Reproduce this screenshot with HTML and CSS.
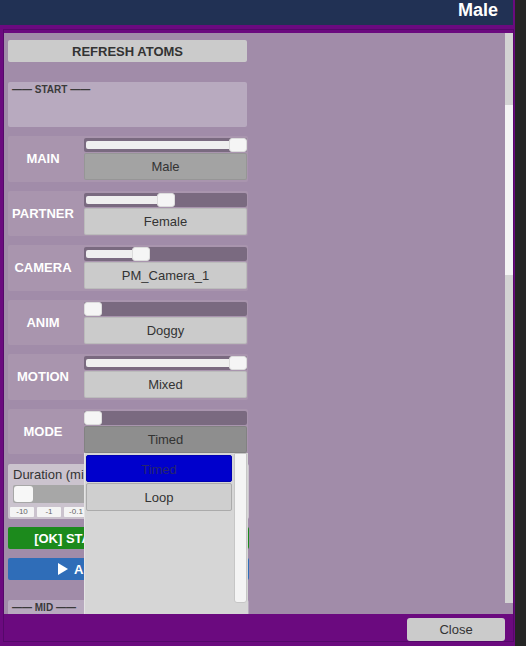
FILE: index.html
```html
<!DOCTYPE html>
<html lang="en">

<head>
    <meta charset="UTF-8">
    <meta name="viewport" content="width=device-width, initial-scale=1.0">
    <title>Male</title>
    <link rel="stylesheet" href="styles.css">
</head>

<body>
    <div class="window">
        <div class="titlebar">
            <span class="title">Male</span>
        </div>

        <div class="frame">
            <div class="panel">
                <div class="column">
                    <button class="btn refresh">REFRESH ATOMS</button>

                    <div class="section start">—— START ——</div>

                    <!-- atom rows -->
                    <div class="row first">
                        <div class="row-label">MAIN</div>
                        <div class="row-controls">
                            <div class="track">
                                <div class="fill" style="width: 145px"></div>
                                <div class="thumb" style="left: 145px"></div>
                            </div>
                            <div class="dropdown selected">Male</div>
                        </div>
                    </div>

                    <div class="row">
                        <div class="row-label">PARTNER</div>
                        <div class="row-controls">
                            <div class="track">
                                <div class="fill" style="width: 73px"></div>
                                <div class="thumb" style="left: 73px"></div>
                            </div>
                            <div class="dropdown">Female</div>
                        </div>
                    </div>

                    <div class="row">
                        <div class="row-label">CAMERA</div>
                        <div class="row-controls">
                            <div class="track">
                                <div class="fill" style="width: 48px"></div>
                                <div class="thumb" style="left: 48px"></div>
                            </div>
                            <div class="dropdown">PM_Camera_1</div>
                        </div>
                    </div>

                    <div class="row">
                        <div class="row-label">ANIM</div>
                        <div class="row-controls">
                            <div class="track">
                                <div class="thumb" style="left: 0"></div>
                            </div>
                            <div class="dropdown">Doggy</div>
                        </div>
                    </div>

                    <div class="row">
                        <div class="row-label">MOTION</div>
                        <div class="row-controls">
                            <div class="track">
                                <div class="fill" style="width: 145px"></div>
                                <div class="thumb" style="left: 145px"></div>
                            </div>
                            <div class="dropdown">Mixed</div>
                        </div>
                    </div>

                    <div class="row">
                        <div class="row-label">MODE</div>
                        <div class="row-controls">
                            <div class="track">
                                <div class="thumb" style="left: 0"></div>
                            </div>
                            <div class="dropdown open">Timed</div>
                        </div>
                    </div>

                    <!-- duration slider -->
                    <div class="duration">
                        <div class="duration-label">Duration (minutes)</div>
                        <div class="duration-track">
                            <div class="duration-thumb"></div>
                        </div>
                        <div class="steps">
                            <span class="step">-10</span>
                            <span class="step">-1</span>
                            <span class="step">-0.1</span>
                            <span class="step">+0.1</span>
                            <span class="step">+1</span>
                            <span class="step">+10</span>
                        </div>
                    </div>

                    <button class="btn green">[OK] STARTED - TAP TO STOP</button>
                    <button class="btn blue">
                        <svg class="play" width="10" height="12" viewBox="0 0 10 12">
                            <path d="M0 0 L10 6 L0 12 Z" fill="#fff" />
                        </svg>
                        APPLY TRANSITION
                    </button>

                    <div class="section mid">—— MID ——</div>

                    <!-- open MODE dropdown -->
                    <div class="popup">
                        <div class="popup-list">
                            <div class="option active">Timed</div>
                            <div class="option">Loop</div>
                        </div>
                        <div class="popup-scroll"></div>
                    </div>
                </div>

                <div class="scrollbar">
                    <div class="scroll-thumb"></div>
                </div>
            </div>

            <div class="footer">
                <button class="close">Close</button>
            </div>
        </div>
    </div>
</body>

</html>
```

FILE: styles.css
```css
body {
    margin: 0;
    background-color: #252525;
    font-family: 'Liberation Sans', Arial, sans-serif;
}

.window {
    width: 515px;
    height: 646px;
    background-color: #6b0a7f;
    overflow: hidden;
}

.titlebar {
    width: 513px;
    height: 25px;
    background-color: #213154;
    display: flex;
    justify-content: flex-end;
    box-sizing: border-box;
    padding-right: 15px;
}

.title {
    color: white;
    font-size: 18px;
    font-weight: bold;
    line-height: 20px;
}

.frame {
    margin: 4px 1px 0 3px;
    border: 1px solid #55086a;
    padding-top: 3px;
}

.panel {
    height: 581px;
    background-color: #a18ca9;
    display: flex;
    justify-content: space-between;
    overflow: hidden;
}

.column {
    position: relative;
    width: 240px;
    margin-left: 4px;
    padding-top: 7px;
    display: flex;
    flex-direction: column;
    flex-shrink: 0;
}

.btn {
    height: 22px;
    border: none;
    border-radius: 2px;
    font-family: inherit;
    font-size: 13px;
    font-weight: bold;
    padding: 0;
    flex-shrink: 0;
    white-space: nowrap;
    overflow: hidden;
}

.refresh {
    width: 239px;
    background-color: #cbcbcb;
    color: #333;
}

.green {
    margin-top: 8px;
    width: 241px;
    background-color: #1c8a1c;
    color: white;
}

.blue {
    margin-top: 9px;
    width: 241px;
    background-color: #2f6db8;
    color: white;
}

.play {
    vertical-align: -1px;
    margin-right: 3px;
}

.section {
    background-color: #b8aabf;
    border-radius: 2px;
    flex-shrink: 0;
    box-sizing: border-box;
    padding: 1px 4px;
    font-size: 10px;
    font-weight: bold;
    color: #3a3a3a;
    line-height: 13px;
}

.start {
    margin-top: 20px;
    height: 45px;
    width: 239px;
}

.mid {
    margin-top: 20px;
    height: 40px;
    width: 241px;
}

.row {
    display: flex;
    height: 45.5px;
    margin-top: 9px;
    background-color: #a995ae;
    border-radius: 2px;
    flex-shrink: 0;
}

.row-label {
    width: 70px;
    align-self: center;
    text-align: center;
    color: white;
    font-size: 13px;
    font-weight: bold;
}

.row-controls {
    width: 163px;
    margin-left: 6px;
    padding-top: 2px;
}

.track {
    position: relative;
    height: 14px;
    background-color: #7a6a80;
    border-radius: 2px;
}

.fill {
    position: absolute;
    left: 2px;
    top: 3px;
    height: 8px;
    background-color: #efefef;
    border-radius: 2px;
}

.thumb {
    position: absolute;
    top: 0;
    width: 18px;
    height: 14px;
    box-sizing: border-box;
    background-color: #f5f5f5;
    border: 1px solid #dcdcdc;
    border-radius: 3px;
}

.dropdown {
    margin-top: 1px;
    height: 27px;
    line-height: 27px;
    text-align: center;
    font-size: 13px;
    color: #333;
    background-color: #cbcbcb;
    border-radius: 2px;
    box-shadow: inset 0 0 0 1px rgba(0, 0, 0, 0.08);
}

.dropdown.selected {
    background-color: #a3a3a3;
}

.dropdown.open {
    background-color: #8e8e8e;
}

.duration {
    margin-top: 10px;
    height: 55px;
    width: 241px;
    box-sizing: border-box;
    padding: 2px 5px;
    background-color: #cbc3ce;
    border-radius: 2px;
    flex-shrink: 0;
}

.duration-label {
    font-size: 13px;
    line-height: 17px;
    color: #333;
}

.duration-track {
    margin-top: 2px;
    height: 18px;
    background-color: #a7a7a7;
    border-radius: 2px;
    padding: 1px;
    box-sizing: border-box;
}

.duration-thumb {
    width: 19px;
    height: 16px;
    background-color: #f7f7f7;
    border-radius: 3px;
}

.steps {
    display: flex;
    gap: 3px;
    margin: 4px 0 0 -3px;
}

.step {
    width: 24px;
    height: 10px;
    line-height: 10px;
    background-color: #f4f4f4;
    border-radius: 1px;
    text-align: center;
    font-size: 8px;
    color: #666;
}

.popup {
    position: absolute;
    left: 76px;
    top: 420px;
    width: 164px;
    height: 170px;
    background-color: #d6d6d6;
    border-left: 1px solid #e4e4e4;
    box-sizing: border-box;
    display: flex;
}

.popup-list {
    flex: 1;
    padding: 2px 2px 2px 1px;
}

.option {
    height: 27px;
    line-height: 27px;
    text-align: center;
    font-size: 13px;
    color: #333;
    background-color: #cfcfcf;
    border: 1px solid #ababab;
    border-radius: 2px;
    box-sizing: border-box;
}

.option + .option {
    margin-top: 1px;
    height: 28px;
}

.option.active {
    background-color: #0000cc;
    border-color: #0000b0;
    color: #26266e;
}

.popup-scroll {
    width: 13px;
    height: 150px;
    margin-right: 1px;
    box-sizing: border-box;
    background-color: #f4f4f4;
    border: 1px solid #c6c6c6;
    border-radius: 0 0 3px 3px;
}

.scrollbar {
    width: 8px;
    height: 570px;
    background-color: #d3d3d3;
}

.scroll-thumb {
    margin-top: 72px;
    height: 170px;
    background-color: #f4f4f4;
}

.footer {
    height: 27px;
    display: flex;
    justify-content: flex-end;
    align-items: flex-start;
    padding: 4px 8px 0 0;
    box-sizing: border-box;
}

.close {
    width: 98px;
    height: 23px;
    border: none;
    border-radius: 3px;
    background-color: #cbcbcb;
    color: #333;
    font-family: inherit;
    font-size: 13px;
    padding: 0;
}
```
